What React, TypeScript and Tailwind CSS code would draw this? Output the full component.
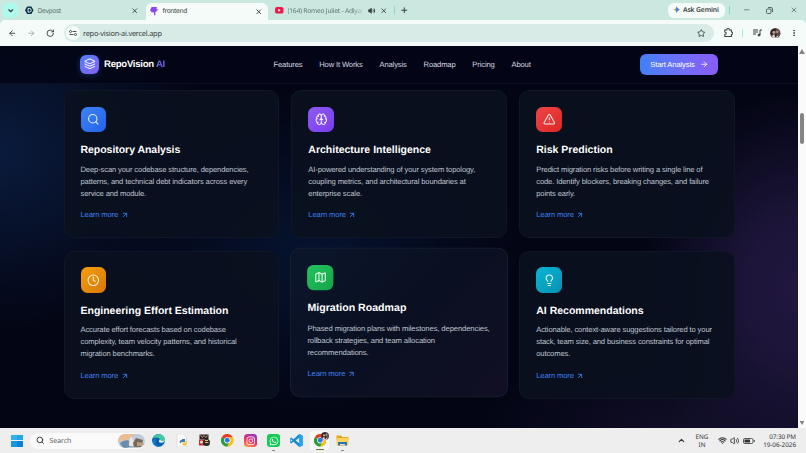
import React from "react";
import {
  ArrowLeft, ArrowRight, ArrowUpRight, BatteryMedium, Brain, ChevronDown, ChevronUp, Clock, Layers, Lightbulb,
  Map as MapIcon, Minus, MoreVertical, Plus, RotateCw, Search, Star, TriangleAlert, Volume2, Wifi, X,
} from "lucide-react";
import { FaInstagram, FaWhatsapp } from "react-icons/fa";

const cards = [
  { Icon: Search, tile: "from-[#3b82f6] to-[#2563eb]", title: "Repository Analysis", track: "tracking-[-0.04px]", lines: ["Deep-scan your codebase structure, dependencies,", "patterns, and technical debt indicators across every", "service and module."] },
  { Icon: Brain, tile: "from-[#8b5cf6] to-[#7c3aed]", title: "Architecture Intelligence", track: "tracking-[0px]", lines: ["AI-powered understanding of your system topology,", "coupling metrics, and architectural boundaries at", "enterprise scale."] },
  { Icon: TriangleAlert, tile: "from-[#ef4444] to-[#dc2626]", title: "Risk Prediction", track: "tracking-[0px]", lines: ["Predict migration risks before writing a single line of", "code. Identify blockers, breaking changes, and failure", "points early."] },
  { Icon: Clock, tile: "from-[#f59e0b] to-[#d97706]", title: "Engineering Effort Estimation", track: "tracking-[-0.01px]", lines: ["Accurate effort forecasts based on codebase", "complexity, team velocity patterns, and historical", "migration benchmarks."] },
  { Icon: MapIcon, tile: "from-[#22c55e] to-[#16a34a]", title: "Migration Roadmap", track: "tracking-[0px]", lifted: true, lines: ["Phased migration plans with milestones, dependencies,", "rollback strategies, and team allocation", "recommendations."] },
  { Icon: Lightbulb, tile: "from-[#06b6d4] to-[#0891b2]", title: "AI Recommendations", track: "tracking-[0px]", lines: ["Actionable, context-aware suggestions tailored to your", "stack, team size, and business constraints for optimal", "outcomes."] },
];

function FeatureCard({ card }: { card: (typeof cards)[number] }) {
  const { Icon } = card;
  return (
    <article
      className={`flex h-[148px] flex-col items-start rounded-[10px] border pt-[15.8px] ${
        card.lifted
          ? "translate-y-[-2.5px] scale-[1.01] border-[#151e33] bg-[linear-gradient(135deg,#0b152b,#0a1021_50%,#110f24)] pl-[16.3px]"
          : "border-[#0f1727] bg-[#0a101e]/93 pl-[16px]"
      }`}
    >
      <span className={`flex size-[25.5px] items-center justify-center rounded-[6.5px] bg-gradient-to-br ${card.tile}`}>
        <Icon size={12.6} strokeWidth={2} className="text-white/90" />
      </span>
      <h3 className={`mt-[10px] whitespace-nowrap text-[10.5px] font-bold leading-[16px] text-white ${card.track}`}>{card.title}</h3>
      <p className="mt-[5.7px] whitespace-nowrap text-[7.6px] leading-[12px] tracking-[-0.124px] text-[#bfc5d1]">
        {card.lines.map((l) => (
          <span key={l} className="block">{l}</span>
        ))}
      </p>
      <a className="mt-[9.4px] flex items-center gap-[2.5px] text-[7.6px] leading-[11px] tracking-[-0.13px] text-[#3b80ee]">
        Learn more <ArrowUpRight size={8} strokeWidth={2.5} className="mt-[0.4px]" />
      </a>
    </article>
  );
}

function ChromeLogo({ className }: { className: string }) {
  return (
    <svg viewBox="0 0 24 24" className={className}>
      <circle cx="12" cy="12" r="12" fill="#fbc116" />
      <path d="M12 12 1.6 6A12 12 0 0 1 22.4 6Z" fill="#e33b2e" />
      <path d="M12 12 1.6 6A12 12 0 0 0 12 24l5-9Z" fill="#269f42" />
      <path d="M12 6h10.4A12 12 0 0 1 12 24l5.2-9Z" fill="#fbc116" />
      <circle cx="12" cy="12" r="6" fill="#fff" />
      <circle cx="12" cy="12" r="4.7" fill="#3478e5" />
    </svg>
  );
}

function Avatar({ className }: { className: string }) {
  return (
    <svg viewBox="0 0 12 12" className={className}>
      <circle cx="6" cy="6" r="6" fill="#5a4844" />
      <path d="M1 3Q4 0 7 1L5 6 1 8Z" fill="#282426" />
      <circle cx="4.4" cy="5" r="1.7" fill="#c19e8c" />
      <circle cx="8.3" cy="4.4" r="1.6" fill="#a98a7d" />
      <path d="M2 10Q4 6 6 8T10 8L8 12H4Z" fill="#d5cbc6" />
      <path d="M5.5 6 8 7 7 11 5.5 10Z" fill="#302a2d" />
    </svg>
  );
}

function BrowserChrome() {
  return (
    <header className="flex h-[45.5px] flex-col bg-[#cae7e0] font-['Noto_Sans','Open_Sans',sans-serif] text-[#38413f]">
      <div className="flex h-[20px] shrink-0 items-center">
        <span className="ml-[3px] mt-px flex h-[15px] w-[15px] shrink-0 items-center justify-center rounded-[5px] bg-[#aefbee]">
          <ChevronDown size={7.5} strokeWidth={4} />
        </span>
        <div className="flex w-[128px] items-center pl-[7px] pt-px">
          <svg viewBox="0 0 16 16" className="size-[8.5px]">
            <path d="M4 .8h8L16 8l-4 7.2H4L0 8Z" fill="#063349" />
            <path d="M5.8 4.5h2.4a3.5 3.5 0 0 1 0 7H5.8Z" fill="none" stroke="#fff" strokeWidth="1.7" />
          </svg>
          <span className="ml-[4px] pt-[1px] text-[6.7px] tracking-[-0.32px] text-[#5b716d]">Devpost</span>
          <X size={7.5} strokeWidth={2.8} className="ml-auto mr-[8px]" />
        </div>
        <div className="flex h-[17px] w-[122px] items-center self-end rounded-t-[6px] bg-[#f5fbf9] pl-[4px]">
          <svg viewBox="0 0 16 16" className="size-[8.5px]">
            <path d="M3 0h10l-1 4h4l-6 6v5l-2 1-1-6H3L0 6Z" fill="#8a47f6" />
          </svg>
          <span className="ml-[4px] text-[6.7px] tracking-[-0.4px]">frontend</span>
          <X size={7.5} strokeWidth={3} className="ml-auto mr-[5.5px]" />
        </div>
        <div className="flex w-[126px] items-center pl-[7px] pt-px">
          <svg viewBox="0 0 18 14" className="h-[6.5px] w-[8.5px]">
            <rect width="18" height="14" rx="4" fill="#f21646" />
            <path d="m7 4 5 3-5 3Z" fill="#fff" />
          </svg>
          <span className="ml-[4px] w-[76px] whitespace-nowrap bg-[linear-gradient(90deg,#5b716d_86%,#cae7e0)] bg-clip-text pt-[1px] text-[6.7px] tracking-[-0.24px] text-transparent">(164) Romeo Juliet - Adiyar</span>
          <Volume2 size={7.5} strokeWidth={2.2} className="ml-[4px] fill-current" />
          <X size={7.5} strokeWidth={2.8} className="ml-[5px]" />
        </div>
        <span className="h-[8px] w-px bg-[#8bdccb]" />
        <Plus size={8.5} strokeWidth={2.8} className="ml-[4.5px]" />
        <div className="ml-auto flex items-center">
          <span className="flex h-[15px] w-[57px] items-center rounded-[6px] bg-[#f5fbf9] pl-[5px] text-[6.8px] font-semibold">
            <svg viewBox="0 0 12 12" className="mr-[3px] size-[7.5px]">
              <path d="M6 0Q6.5 5 12 6H0Q5.5 5.5 6 0Z" fill="#e15545" />
              <path d="M6 0Q6.5 5.5 12 6 6.5 6.5 6 12Z" fill="#3478ef" />
              <path d="M0 6H6V12Q5.5 6.5 0 6Z" fill="#3ca653" />
              <path d="M6 2V10L1.5 6Z" fill="#e8ae2b" opacity=".7" />
              <path d="M6 1.5Q6.5 5.5 10 6 6.5 6.5 6 10.5L4.5 6Z" fill="#4180ef" />
            </svg>
            <span className="whitespace-nowrap pt-[1px] tracking-[-0.16px]">Ask Gemini</span>
          </span>
          <span className="ml-[4px] h-[8px] w-px bg-[#75dccb]" />
          <Minus size={7.5} strokeWidth={1.8} className="ml-[13px]" />
          <svg viewBox="0 0 14 14" className="ml-[16px] size-[7px]" fill="none" stroke="currentColor" strokeWidth="1.5">
            <rect x="1" y="4" width="9" height="9" rx="2" /><path d="M4 1h6q3 0 3 3v6" />
          </svg>
          <X size={8} strokeWidth={1.8} className="ml-[17px] mr-[8px]" />
        </div>
      </div>
      <div className="flex grow items-center rounded-t-[5px] bg-[#f5fbf9] pl-[8px]">
        <ArrowLeft size={8.5} strokeWidth={2.5} />
        <ArrowRight size={8.5} strokeWidth={2.3} className="ml-[10px] text-[#9aa6a3]" />
        <RotateCw size={8.5} strokeWidth={2.6} className="ml-[10.5px]" />
        <div className="ml-[10px] flex h-[17.5px] w-[650px] items-center rounded-full bg-[#d8ebe6] pl-[2px]">
          <span className="flex size-[14px] items-center justify-center rounded-full bg-[#f5fbf9]">
            <svg viewBox="0 0 16 12" className="h-[6px] w-[8px]" fill="none" stroke="currentColor" strokeWidth="1.8">
              <circle cx="3" cy="3" r="2" /><path d="M7 3h8M1 9h8" /><circle cx="13" cy="9" r="2" />
            </svg>
          </span>
          <span className="ml-[3px] pt-[3px] text-[7.4px] tracking-[-0.24px]">repo-vision-ai.vercel.app</span>
          <Star size={8.5} strokeWidth={2.4} className="ml-auto mr-[8.5px]" />
        </div>
        <svg viewBox="0 0 18 18" className="ml-[9.5px] size-[9.5px]" fill="none" stroke="currentColor" strokeWidth="2">
          <path d="M2 4h4q0-3 2.500-3T11 4h4v4q3 0 3 2.500T15 13v4H2v-4q3 0 3-2.500T2 8Z" transform="translate(-.5 -.3) scale(.97)" />
        </svg>
        <span className="ml-[8.5px] h-[8px] w-px bg-[#a2efe1]" />
        <svg viewBox="0 0 18 16" className="ml-[10px] h-[8px] w-[9px]" fill="none" stroke="currentColor" strokeWidth="2">
          <path d="M0 2h10M0 6h10M0 10h6M14 12V2h4" /><circle cx="12" cy="12" r="2" fill="currentColor" />
        </svg>
        <Avatar className="ml-[8.5px] size-[10.5px]" />
        <MoreVertical size={8} strokeWidth={3} className="ml-[9px]" />
      </div>
    </header>
  );
}

function SiteHeader() {
  return (
    <nav className="flex h-[38px] items-center border-b border-[#0b1120] bg-[#030616]/90 pl-[80px] pr-[80px]">
      <span className="flex size-[19px] items-center justify-center rounded-[6px] bg-gradient-to-br from-[#477ff7] to-[#8560f6] shadow-[0_1px_6px_#3b82f650]">
        <Layers size={11.5} strokeWidth={2.1} className="text-white/90" />
      </span>
      <span className="ml-[5px] w-[62px] whitespace-nowrap pt-[1.5px] text-[9.6px] font-bold tracking-[-0.27px] text-white">
        RepoVision <span className="bg-gradient-to-r from-[#4c7bed] to-[#8858ee] bg-clip-text text-transparent">AI</span>
      </span>
      <div className="ml-[107.5px] flex gap-[16.8px] whitespace-nowrap pt-[1px] text-[7.6px] tracking-[-0.13px] text-[#d3d8e2]">
        <a>Features</a><a>How It Works</a><a>Analysis</a><a>Roadmap</a><a>Pricing</a><a>About</a>
      </div>
      <button className="ml-auto flex h-[21px] w-[78px] items-center justify-center gap-[5px] whitespace-nowrap rounded-[6px] bg-gradient-to-r from-[#3f80f6] to-[#895cf6] pl-[0.5px] pt-[1px] text-[7.6px] tracking-[-0.12px] text-white">
        Start Analysis <ArrowRight size={8.5} strokeWidth={2.2} />
      </button>
    </nav>
  );
}

function Taskbar() {
  return (
    <footer className="flex h-[25px] items-center bg-[#eeeeef] pl-[11px] font-['Noto_Sans','Open_Sans',sans-serif] text-[#333]">
      <span className="grid size-[12px] grid-cols-2 gap-[0.6px]">
        <i className="bg-[#31b4ee]" /><i className="bg-[#23a5e7]" /><i className="bg-[#1498e2]" /><i className="bg-[#0980d2]" />
      </span>
      <span className="ml-[7px] flex h-[16px] w-[115px] items-center rounded-full bg-[#fafafa] pl-[6px] text-[7px] text-[#626262]">
        <Search size={8.5} strokeWidth={2.6} className="mr-[5px] text-[#333]" />
        <span className="pt-[3px] tracking-[-0.06px]">Search</span>
        <svg viewBox="0 0 27 14" className="ml-auto h-[14px] w-[27px]">
          <rect width="27" height="14" rx="7" fill="#c2c9d8" />
          <path d="M0 7a7 7 0 0 1 7-7h10l-6 5-11 3Z" fill="#e9bd91" />
          <path d="M2 9q5-4 10-2l4 5-9 2Q3 13 2 9Z" fill="#688eaf" />
          <path d="m13 2 3 5v5h-5V8Z" fill="#eee5dc" />
          <path d="m18 4 7 2-2 7h-7l-1-4Z" fill="#72695f" />
          <path d="m19 8 7 1-2 3h-5Z" fill="#bf9c7b" />
        </svg>
      </span>
      <svg viewBox="0 0 24 24" className="ml-[6.5px] size-[13px]">
        <circle cx="12" cy="12" r="12" fill="#087fc9" />
        <path d="M1 9C4-2 21-3 24 10c1 6-7 7-10 4 3-3 0-7-5-7-4 0-7 2-8 5Z" fill="#43c99c" />
        <path d="M0 11C3 5 13 5 14 11c0 2-2 3 0 5 3 2 6 1 8 0-2 5-7 7-11 6-6-2-6-10-3-13-4 0-7 2-8 5Z" fill="#135eac" />
        <path d="M14 10q6 5 10 1-2 5-7 5t-4-3Z" fill="#eeeeef" />
      </svg>
      <svg viewBox="0 0 24 26" className="ml-[11px] h-[13px] w-[12px]">
        <path d="M2 0h13l6 6v20H2Z" fill="#fafafa" stroke="#ccc" />
        <path d="M12 10h6v6h-7l-2 3-2-3q0-4 5-4Z" fill="#3d77ad" />
        <path d="M13 22v-5h6l1-4q4 2 2 6l-4 5Z" fill="#f5c733" />
      </svg>
      <svg viewBox="0 0 24 26" className="ml-[10.5px] h-[13px] w-[12px]">
        <path d="M3 1h18v10H3Z" fill="#252323" /><path d="m5 2 4 5 3-4 4 4 3-4" stroke="#b89772" strokeWidth="2" fill="none" />
        <path d="M2 11h11v12H2Z" fill="#c23131" /><circle cx="17" cy="17" r="7" fill="#292725" />
        <path d="M14 13h6M14 17h7" stroke="#e4c57e" strokeWidth="2" /><circle cx="7" cy="16" r="3" fill="#efdac2" />
      </svg>
      <ChromeLogo className="ml-[11.3px] size-[12.5px]" />
      <span className="ml-[10.5px] flex size-[12.5px] items-center justify-center rounded-[3.5px] bg-[linear-gradient(25deg,#ffb243,#ed3165_45%,#7d39d1)] text-white"><FaInstagram size={9.5} /></span>
      <span className="relative ml-[10.5px] flex size-[13px] items-center justify-center rounded-[3px] bg-[#13cb55] text-white"><FaWhatsapp size={10} /><i className="absolute -bottom-[3.5px] h-px w-[3px] bg-[#888]" /></span>
      <svg viewBox="0 0 24 24" className="ml-[10px] size-[13px]">
        <path d="M17 0 6.500 9.600 2.200 6.300.5 7.200v9.600l1.700.9 4.300-3.300L17 24l6.500-3V3Z M17 7v10l-6.500-5Z" fillRule="evenodd" fill="#168bd2" />
        <path d="m17 0 6.500 3v18L17 24Z" fill="#2aa4ed" />
        <path d="M2 9.500v5L4.500 12Z" fill="#eeeeef" />
      </svg>
      <span className="relative ml-[7px] flex size-[19px] items-center justify-center rounded-[3px] bg-[#fafafa]">
        <ChromeLogo className="size-[12.5px]" /><Avatar className="absolute right-0 top-[1px] size-[8px]" /><i className="absolute bottom-0 h-[1.5px] w-[8px] rounded-full bg-[#716d30]" />
      </span>
      <span className="relative ml-[6.5px] flex h-[13px] w-[13px]">
        <svg viewBox="0 0 26 24" className="size-[13px]">
          <path d="M1 2h9l3 3h12v6H1Z" fill="#e5a51f" /><path d="M1 7h24v15H1Z" fill="#fbd35d" /><path d="M4 15h18v7H4Z" fill="#2376b5" /><path d="M8 19h10v3H8Z" fill="#eee0a0" />
        </svg>
        <i className="absolute -bottom-[3.5px] left-[5px] h-px w-[3px] bg-[#888]" />
      </span>
      <ChevronUp size={9} strokeWidth={3} className="ml-auto" />
      <span className="ml-[7.5px] w-[17px] text-center text-[6.3px] leading-[8px]">ENG<br />IN</span>
      <Wifi size={9} strokeWidth={2.8} className="ml-[7px]" />
      <Volume2 size={9.5} strokeWidth={2.2} className="ml-[3px]" />
      <svg viewBox="0 0 24 12" className="ml-[4px] h-[6px] w-[12px]">
        <rect x="1" y="1" width="19" height="10" rx="2.5" fill="none" stroke="#333" strokeWidth="1.6" />
        <rect x="3" y="3" width="11" height="6" fill="#333" /><path d="M22.500 4v4" stroke="#333" strokeWidth="1.800" />
      </svg>
      <span className="ml-[6px] mr-[10px] flex w-[35px] flex-col items-end whitespace-nowrap text-[6.3px] leading-[8px]">
        <span className="tracking-[-0.05px]">07:30 PM</span>
        <span>19-06-2026</span>
      </span>
    </footer>
  );
}

export default function App() {
  return (
    <div className="flex h-[453px] w-[806px] flex-col overflow-hidden font-['Liberation_Sans',Arial,sans-serif] [text-rendering:geometricPrecision]">
      <BrowserChrome />
      <div className="flex h-[382.5px] shrink-0">
        <main className="w-[798px] bg-[#030514] bg-[radial-gradient(ellipse_160px_200px_at_800px_245px,#21163f,#1d1539_35%,transparent),radial-gradient(ellipse_210px_180px_at_0px_105px,#0a1b3c,transparent),radial-gradient(ellipse_210px_160px_at_310px_205px,#06132f,transparent),radial-gradient(ellipse_200px_90px_at_680px_383px,#110e27,transparent)]">
          <SiteHeader />
          <section className="grid grid-cols-3 gap-x-[12.3px] gap-y-[12.5px] pl-[63.5px] pr-[63.2px] pt-[6.5px]">
            {cards.map((c) => <FeatureCard key={c.title} card={c} />)}
          </section>
        </main>
        <aside className="flex w-[8px] flex-col items-center bg-[#fafafa] py-[3px]">
          <svg viewBox="0 0 6 5" className="h-[5px] w-[6px]"><path d="M3 0 6 5H0Z" fill="#858585" /></svg>
          <i className="mt-[59px] h-[31px] w-[4px] rounded-full bg-[#858585]" />
          <svg viewBox="0 0 6 5" className="mt-auto h-[4px] w-[6px]"><path d="M0 0H6L3 5Z" fill="#858585" /></svg>
        </aside>
      </div>
      <Taskbar />
    </div>
  );
}
